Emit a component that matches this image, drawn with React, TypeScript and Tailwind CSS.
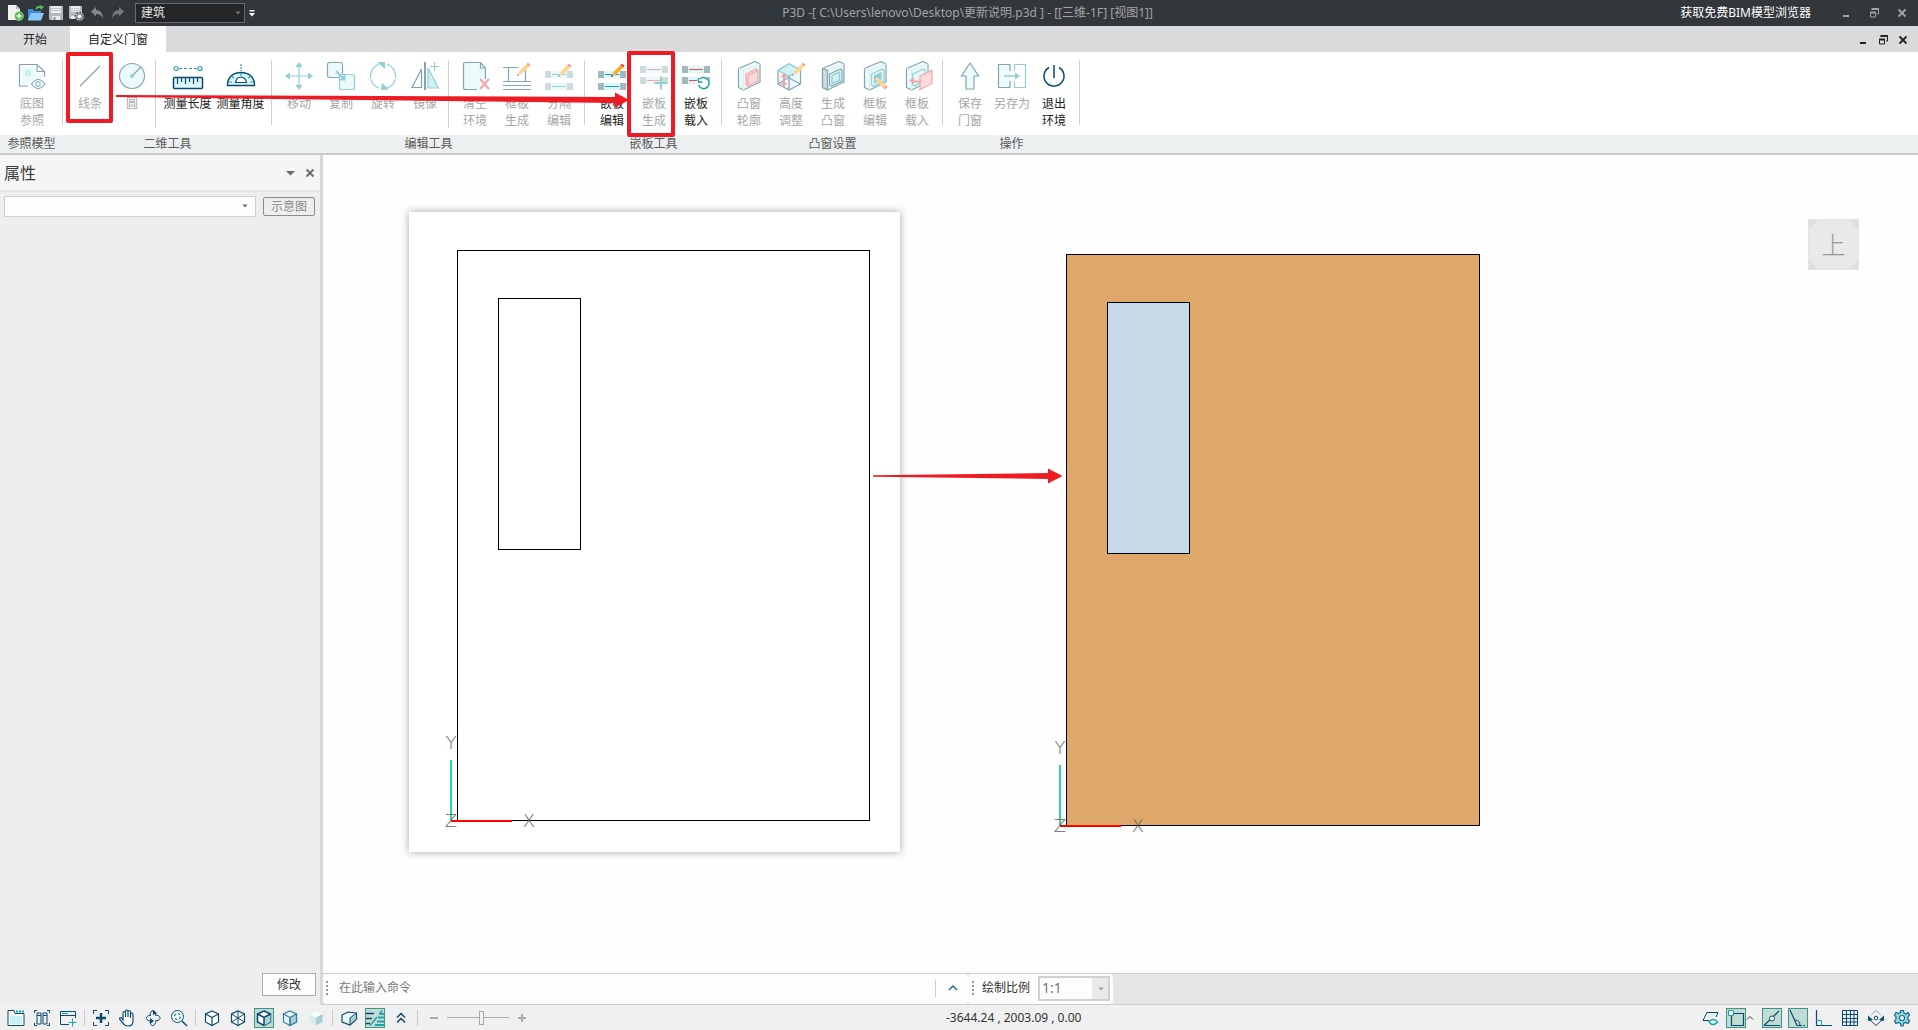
import { useState } from 'react';
import type { ReactNode } from 'react';
import clsx from 'clsx';

const NAVY = '#0b4a6f';
const TEAL = '#1fa3ab';
const PALE = '#dcf7fa';
const RED = '#ee4b50';

interface IconProps {
  children: ReactNode;
  faded?: boolean;
}

function RibbonIcon({ children, faded }: IconProps) {
  return (
    <svg
      width="28"
      height="28"
      viewBox="0 0 28 28"
      fill="none"
      stroke={NAVY}
      strokeWidth="1.2"
      className={clsx('overflow-visible', faded && 'opacity-50')}
      aria-hidden="true"
    >
      {children}
    </svg>
  );
}

/* ---------- shared icon parts ---------- */

function Pencil({ x = 0, y = 0 }: { x?: number; y?: number }) {
  return (
    <g transform={`translate(${x} ${y})`} stroke="none">
      <path d="M2 9.5 9.5 2l2.6 2.6-7.5 7.5z" fill="#ffab1a" />
      <path d="M9.5 2 11 .5l2.6 2.6-1.5 1.5z" fill="#e8413c" />
      <path d="M2 9.5 4.6 12.1 0 14z" fill="#e9c08d" />
      <path d="M.8 11.8 2.3 13 0 14z" fill="#333" />
    </g>
  );
}

function PanelRow({ y, color }: { y: number; color: string }) {
  return (
    <g stroke="none">
      <rect x="0" y={y} width="28" height="7" fill={PALE} />
      <rect x="0" y={y} width="6" height="7" fill="#9fb9bc" />
      <rect x="22" y={y} width="6" height="7" fill="#9fb9bc" />
      <rect x="7" y={y + 3} width="14" height="1" fill={color} />
    </g>
  );
}

function BayBox() {
  return (
    <>
      <path d="M3.5 6.5 20 -.5 25 2v18L8.500 28l-5-2.500z" fill={PALE} strokeLinejoin="round" />
      <path d="M3.500 6.500 8.500 8.500V28M8.500 8.500 25 2" stroke="#bcdfe4" />
    </>
  );
}

/* ---------- ribbon icons ---------- */

const icons: Record<string, ReactNode> = {
  reference: (
    <>
      <path d="M10 24H1.500V2.500H19l7.500 7V15M19 2.500v7h7.500" />
      <path d="M4 5h13v7h7v4l-8 1-5 5H4z" fill={PALE} stroke="none" />
      <rect x="7" y="8" width="6" height="6" fill="#9ce0dc" stroke="none" />
      <path d="M13.500 22q6.500-9 13.500 0-7 9-13.500 0z" fill="#fff" />
      <circle cx="20" cy="22" r="2.200" stroke={TEAL} strokeWidth="1.500" />
    </>
  ),
  line: <path d="M4 24 24 4" />,
  circle: (
    <>
      <circle cx="14" cy="14" r="12.500" fill={PALE} />
      <path d="m14 14 9-9" />
      <circle cx="14" cy="14" r="2" fill={TEAL} stroke="none" />
    </>
  ),
  length: (
    <>
      <circle cx="2" cy="6.500" r="2" stroke={TEAL} />
      <circle cx="26" cy="6.500" r="2" stroke={TEAL} />
      <path d="M5 6.500h18" stroke={TEAL} strokeDasharray="3 2" />
      <rect x="-.5" y="15.500" width="29" height="11" rx="1" fill={PALE} strokeWidth="1.500" />
      <path d="M3.500 16v6M7.500 16v4M11.500 16v6M15.500 16v4M19.500 16v6M23.500 16v4" />
    </>
  ),
  angle: (
    <>
      <path d="M14 2v7" stroke={TEAL} strokeDasharray="2 1" />
      <path d="M.5 23.500C.5 15 6 10.500 14 10.500S27.500 15 27.500 23.500z" fill={PALE} strokeWidth="1.500" />
      <path d="M8.500 20.500c1-7 10-7 11 0z" fill="#fff" />
      <path d="M14 11v3M5 14.500l2 1.500M23 14.500 21 16M2 20h3M23 20h3" stroke={TEAL} />
    </>
  ),
  move: (
    <g stroke={TEAL} fill={TEAL}>
      <path d="M14 3v22M3 14h22" />
      <path d="m14 0 3.500 5h-7zM14 28l3.500-5h-7zM0 14l5-3.500v7zM28 14l-5-3.500v7z" stroke="none" />
    </g>
  ),
  copy: (
    <>
      <rect x=".5" y=".5" width="15" height="15" rx="2" fill={PALE} />
      <rect x="12.500" y="12.500" width="15" height="15" rx="2" fill={PALE} stroke={TEAL} />
      <path d="m9 9 7 7" stroke={TEAL} strokeWidth="2" />
      <path d="M18.500 12v6.500H12z" fill={TEAL} stroke="none" />
    </>
  ),
  rotate: (
    <>
      <path d="M10 2C-2 7-1 22 10 26M18 2c12 5 11 20 0 24" stroke={TEAL} strokeDasharray="18 1" />
      <path d="M8 0h8v7zM12 28l8-.5L13 21z" fill={TEAL} stroke="none" />
    </>
  ),
  mirror: (
    <>
      <path d="M10.500 7v18.500H1z" />
      <path d="M17 6v20h10.500z" fill="#a5e3e0" stroke={TEAL} />
      <path d="M14 0v28" strokeWidth="2" />
      <path d="M23.500 0v9M19 4.500h9" stroke={TEAL} />
    </>
  ),
  clear: (
    <>
      <path d="M24.500 17V6l-5-5.500H4.500q-2 0-2 2v23q0 2 2 2H16M19.500.5V6h5" fill={PALE} />
      <path d="m19 17 9 10M28 17l-9 10" stroke={RED} strokeWidth="2" />
    </>
  ),
  frame: (
    <>
      <path d="M0 5.500h15M5.500 5.500v14M22.500 8v11.500M0 19.500h28M0 23.500h28M0 27.500h28" />
      <Pencil x={14} y={0} />
    </>
  ),
  divide: (
    <>
      <PanelRow y={9} color={TEAL} />
      <PanelRow y={21} color={TEAL} />
      <Pencil x={13} y={1} />
    </>
  ),
  panelAdd: (
    <>
      <PanelRow y={4} color={RED} />
      <PanelRow y={15} color={RED} />
      <path d="M21 14.500v13M14.500 21h13" stroke={TEAL} strokeWidth="2" />
    </>
  ),
  panelLoad: (
    <>
      <PanelRow y={4} color={RED} />
      <PanelRow y={15} color={RED} />
      <circle cx="21.500" cy="21.500" r="7" fill="#fff" stroke="none" />
      <path d="M18 17a5.500 5.500 0 1 1-1.500 6M16.500 16v4h4" stroke={TEAL} strokeWidth="1.500" />
    </>
  ),
  bayOutline: (
    <>
      <BayBox />
      <path d="m11 12 10-5 2 1.500V19l-10 5-2-1z" fill="#f9b3b5" stroke={RED} />
      <path d="m13 13.500 10-5" stroke={RED} />
      <path d="M13 13.500V24" stroke={RED} />
    </>
  ),
  bayHeight: (
    <>
      <path d="M1 8.500 12 2l11.500 6v14L12 28 1 22z" fill={PALE} />
      <path d="M1 8.500 12 2l11.500 6L12 14z" fill="#a5e3e0" stroke={TEAL} />
      <path d="M12 14v14M12 15 1 22M12 16l11.500 6" />
      <path d="M7 13v10" stroke={RED} strokeWidth="2" />
      <path d="m7 11 3.500 4h-7zM7 25l3.500-4h-7z" fill={RED} stroke="none" />
      <Pencil x={15} y={0} />
    </>
  ),
  bayCreate: (
    <>
      <BayBox />
      <path d="m3.500 6.500 5 2V28l-5-2.500z" fill="#9fb9bc" />
      <path d="m10.500 12 11-5 1.500 1v11l-10.500 5-2-1z" fill="#c9eef2" />
      <path d="M13 13.500 20.500 10v8L13 21.500z" fill="#a5e3e0" stroke={TEAL} />
    </>
  ),
  bayEdit: (
    <>
      <BayBox />
      <path d="m10.500 12 11-5 1.500 1v11l-10.500 5-2-1z" fill="#c9eef2" stroke={TEAL} />
      <path d="M13 13.500 20.500 10v8L13 21.500z" fill={TEAL} stroke="none" />
      {/* pencil tip points up and left */}
      <g transform="translate(13 14) matrix(1 0 0 -1 0 14)">
        <Pencil />
      </g>
    </>
  ),
  bayLoad: (
    <>
      <BayBox />
      <path d="m9.500 12 11-5 1.500 1v11l-10.500 5-2-1z" fill="#c9eef2" stroke={TEAL} />
      <path d="m17 14 12-5.500v13L17 27.500z" fill="#f9b9bb" stroke={RED} />
      <path d="m18 20-10-1" stroke={RED} strokeWidth="2" />
      <path d="m6 18.500 5-3v6z" fill={RED} stroke="none" />
    </>
  ),
  save: <path d="m14 1 8.500 13H18v13h-8V14H5.500z" fill={PALE} />,
  saveAs: (
    <>
      <path d="M12 9V2.500H.5v23H12V19" fill={PALE} />
      <path d="M16.500 9V2.500h11v23h-11V19" stroke={TEAL} />
      <path d="M6 14h12" stroke={TEAL} strokeWidth="1.500" />
      <path d="m22 14-5-3.500v7z" fill={TEAL} stroke="none" />
    </>
  ),
  exit: (
    <>
      <path d="M9 5.500a10 10 0 1 0 10 0" strokeWidth="1.500" />
      <path d="M14 3v13" strokeWidth="1.500" />
    </>
  ),
};

type ToolSize = 'normal' | 'medium' | 'wide';

const toolWidths: Record<ToolSize, string> = {
  normal: 'w-[42px]',
  medium: 'w-[52px]',
  wide: 'w-[53px]',
};

interface Tool {
  icon: string;
  lines: string[];
  enabled?: boolean;
  size?: ToolSize;
}

interface ToolGroup {
  title: string;
  sections: Tool[][];
}

const groups: ToolGroup[] = [
  { title: '参照模型', sections: [[{ icon: 'reference', lines: ['底图', '参照'], size: 'medium' }]] },
  {
    title: '二维工具',
    sections: [
      [
        { icon: 'line', lines: ['线条'] },
        { icon: 'circle', lines: ['圆'] },
      ],
      [
        { icon: 'length', lines: ['测量长度'], enabled: true, size: 'wide' },
        { icon: 'angle', lines: ['测量角度'], enabled: true, size: 'wide' },
      ],
    ],
  },
  {
    title: '编辑工具',
    sections: [
      [
        { icon: 'move', lines: ['移动'] },
        { icon: 'copy', lines: ['复制'] },
        { icon: 'rotate', lines: ['旋转'] },
        { icon: 'mirror', lines: ['镜像'] },
      ],
      [
        { icon: 'clear', lines: ['清空', '环境'] },
        { icon: 'frame', lines: ['框板', '生成'] },
        { icon: 'divide', lines: ['分隔', '编辑'] },
      ],
    ],
  },
  {
    title: '嵌板工具',
    sections: [
      [
        { icon: 'divide', lines: ['嵌板', '编辑'], enabled: true },
        { icon: 'panelAdd', lines: ['嵌板', '生成'] },
        { icon: 'panelLoad', lines: ['嵌板', '载入'], enabled: true },
      ],
    ],
  },
  {
    title: '凸窗设置',
    sections: [
      [
        { icon: 'bayOutline', lines: ['凸窗', '轮廓'] },
        { icon: 'bayHeight', lines: ['高度', '调整'] },
        { icon: 'bayCreate', lines: ['生成', '凸窗'] },
        { icon: 'bayEdit', lines: ['框板', '编辑'] },
        { icon: 'bayLoad', lines: ['框板', '载入'] },
      ],
    ],
  },
  {
    title: '操作',
    sections: [
      [
        { icon: 'save', lines: ['保存', '门窗'] },
        { icon: 'saveAs', lines: ['另存为'] },
        { icon: 'exit', lines: ['退出', '环境'], enabled: true },
      ],
    ],
  },
];

function ToolButton({ tool }: { tool: Tool }) {
  return (
    <button
      className={clsx(
        'flex flex-col items-center gap-[5px] pt-2.5 leading-[17px] whitespace-nowrap',
        toolWidths[tool.size ?? 'normal'],
        tool.enabled ? 'text-[#222]' : 'text-[#a6a6a6]',
      )}
    >
      <RibbonIcon faded={!tool.enabled}>{icons[tool.icon]}</RibbonIcon>
      <span>
        {tool.lines.map((line) => (
          <span key={line} className="block">
            {line}
          </span>
        ))}
      </span>
    </button>
  );
}

function Ribbon() {
  return (
    <div className="flex h-[103px] shrink-0 border-b-2 border-[#c8cacc] bg-[linear-gradient(to_bottom,#fff_83px,#ecf0f1_83px)]">
      {groups.map((group) => (
        <section key={group.title} className="flex flex-col">
          <div className="flex h-[83px] shrink-0 items-start pl-1.5">
            {group.sections.map((section, i) => (
              <div key={i} className="flex items-start">
                {i > 0 && <div className="mt-2 mr-[5px] ml-0.5 h-[68px] w-px bg-[#d0d0d0]" />}
                {section.map((tool) => (
                  <ToolButton key={tool.lines.join('')} tool={tool} />
                ))}
              </div>
            ))}
            <div className="mt-2 ml-1 h-[65px] w-px bg-[#d0d0d0]" />
          </div>
          <h2 className="text-center leading-[18px] text-[#5a5a5a]">{group.title}</h2>
        </section>
      ))}
    </div>
  );
}

/* ---------- window chrome ---------- */

function WindowButtons({ className }: { className?: string }) {
  return (
    <div className={clsx('flex items-center', className)}>
      <button aria-label="最小化">
        <svg width="12" height="12" viewBox="0 0 12 12" fill="none" stroke="currentColor">
          <path d="M3 9h6" strokeWidth="2" />
        </svg>
      </button>
      <button aria-label="还原">
        <svg width="12" height="12" viewBox="0 0 12 12" fill="none" stroke="currentColor">
          <path d="M4 3V2h6.500v5H9" />
          <path d="M3.500 2H11" strokeWidth="2" />
          <path d="M2.500 5.500h5v4.500h-5z" />
          <path d="M2 5.500h6" strokeWidth="2" />
        </svg>
      </button>
      <button aria-label="关闭">
        <svg width="12" height="12" viewBox="0 0 12 12" fill="none" stroke="currentColor" strokeWidth="1.800">
          <path d="m2.500 2.500 7 7M9.500 2.500l-7 7" />
        </svg>
      </button>
    </div>
  );
}

function TitleBar() {
  return (
    <header className="flex h-[26px] shrink-0 items-center bg-[#32373b] text-[#a3a3a3]">
      <div className="flex items-center gap-1 pl-[7px]">
        <button aria-label="新建">
          <svg width="17" height="16" viewBox="0 0 17 16">
            <path d="M1 0h8l4 4v11H1z" fill="#f1f1f1" />
            <path d="m9 0 4 4H9z" fill="#bdbdbd" />
            <circle cx="12" cy="11" r="4.500" fill="#4cb84c" stroke="#d9f5d9" strokeWidth=".5" />
            <path d="M12 8.500v5M9.500 11h5" stroke="#fff" strokeWidth="1.500" />
          </svg>
        </button>
        <button aria-label="打开">
          <svg width="16" height="16" viewBox="0 0 16 16">
            <path d="M0 4h5l1 2h7v9H0z" fill="#3c8ed6" />
            <path d="M3 8h13l-3 7.500H0z" fill="#8cc9fa" />
            <path d="M8 4q2-3 5-2" stroke="#58c35a" strokeWidth="1.800" fill="none" />
            <path d="m12 0 4 2-3.500 3z" fill="#58c35a" />
          </svg>
        </button>
        <button aria-label="保存">
          <svg width="16" height="16" viewBox="0 0 16 16">
            <path d="M1 1h14v14H2l-1-1z" fill="#b5babf" />
            <path d="M3 1h10v7H3z" fill="#eceef0" />
            <path d="M3 3.500h10M3 5.500h10" stroke="#c5c9cc" />
            <path d="M4 11h8v4H4z" fill="#e9ebed" />
            <path d="M5.500 12h2v3h-2z" fill="#8a8f94" />
          </svg>
        </button>
        <button aria-label="保存设置">
          <svg width="17" height="17" viewBox="0 0 17 17">
            <path d="M1 1h13v13H2l-1-1z" fill="#b5babf" />
            <path d="M3 1h9v6H3z" fill="#eceef0" />
            <path d="M3 3.500h9M3 5.500h9" stroke="#c5c9cc" />
            <path d="M3 11h6v3H3z" fill="#e9ebed" />
            <circle cx="11.500" cy="11.500" r="4" fill="#e0e3e6" stroke="#5d666f" strokeWidth="2" strokeDasharray="2 1" />
            <circle cx="11.500" cy="11.500" r="2.500" fill="#fff" stroke="#5d666f" />
          </svg>
        </button>
        <button aria-label="撤销" className="ml-0.5">
          <svg width="14" height="14" viewBox="0 0 14 14">
            <path d="M0 5.500 5 1v3q7 0 7 9-1.500-5-7-5v2.500z" fill="#85888b" />
          </svg>
        </button>
        <button aria-label="重做" className="ml-0.5">
          <svg width="14" height="14" viewBox="0 0 14 14">
            <path d="M13 5.500 8 1v3q-7 0-7 9 1.500-5 7-5v2.500z" fill="#75787b" />
          </svg>
        </button>
      </div>
      <div className="relative ml-2.5">
        <select
          aria-label="专业"
          className="block h-5 w-[110px] appearance-none border border-[#666a6d] bg-[#252627] pl-[5px] text-[#e2e2e2]"
        >
          <option>建筑</option>
        </select>
        <svg width="6" height="4" viewBox="0 0 6 4" className="pointer-events-none absolute top-2 right-1">
          <path d="M.5.500h5L3 3.500z" fill="#77797b" />
        </svg>
      </div>
      <button aria-label="自定义快速访问工具栏" className="ml-1">
        <svg width="6" height="8" viewBox="0 0 6 8" fill="#fff">
          <path d="M.5 1h5v1.500h-5zM0 4h6L3 7.500z" />
        </svg>
      </button>
      <h1 className="flex-1 text-center">P3D -[ C:\Users\lenovo\Desktop\更新说明.p3d ] - [[三维-1F] [视图1]]</h1>
      <a href="#" className="text-white">
        获取免费BIM模型浏览器
      </a>
      <WindowButtons className="gap-4 pr-2.5 pl-[29px]" />
    </header>
  );
}

function TabRow() {
  const [active, setActive] = useState('自定义门窗');
  return (
    <nav className="flex h-[26px] shrink-0 items-center bg-[#d9dadc] text-[#222]">
      <button
        onClick={() => setActive('开始')}
        className={clsx('h-full w-[70px] pt-0.5', active === '开始' && 'bg-white')}
      >
        开始
      </button>
      <button
        onClick={() => setActive('自定义门窗')}
        className={clsx('h-full w-24 pt-0.5', active === '自定义门窗' && 'bg-white')}
      >
        自定义门窗
      </button>
      <WindowButtons className="ml-auto gap-2 pt-0.5 pr-[9px]" />
    </nav>
  );
}

/* ---------- left panel ---------- */

function PropertyPanel() {
  return (
    <aside className="flex w-[323px] shrink-0 flex-col border-r-3 border-[#d9d9d9] bg-[#eee]">
      <div className="flex h-[37px] shrink-0 items-center border-b-2 border-[#e4e4e4] bg-[#f5f5f5] px-1 text-[#6a6a6a]">
        <h2 className="flex-1 text-base text-[#3c3c3c]">属性</h2>
        <button aria-label="面板选项" className="mr-2">
          <svg width="12" height="12" viewBox="0 0 12 12">
            <path d="M2 4h9L6.500 8.500z" fill="currentColor" />
          </svg>
        </button>
        <button aria-label="关闭面板">
          <svg width="12" height="12" viewBox="0 0 12 12" fill="none" stroke="currentColor" strokeWidth="1.800">
            <path d="m2.500 2.500 7 7M9.500 2.500l-7 7" />
          </svg>
        </button>
      </div>
      <div className="flex items-center gap-[7px] py-1 pr-[5px] pl-1">
        <div className="relative flex-1">
          <select aria-label="类型" className="block h-[21px] w-full appearance-none border border-[#d0d0d0] bg-[#fdfdfd]">
            <option></option>
          </select>
          <svg width="6" height="4" viewBox="0 0 6 4" className="pointer-events-none absolute top-2 right-2">
            <path d="M.5.500h5L3 3.500z" fill="#666" />
          </svg>
        </div>
        <button className="h-[19px] w-[52px] rounded-xs border border-[#8c8c8c] leading-none text-[#8c8c8c]">示意图</button>
      </div>
      <button className="mt-auto mr-1 mb-[9px] h-[23px] w-[54px] self-end border border-[#adadad] bg-[#fdfdfd] leading-none text-[#333]">
        修改
      </button>
    </aside>
  );
}

/* ---------- canvas ---------- */

interface DoorProps {
  x: number;
  y: number;
  width: number;
  height: number;
  frame: string;
  glass: string;
}

function Door({ x, y, width, height, frame, glass }: DoorProps) {
  return (
    <g transform={`translate(${x} ${y})`}>
      <g stroke="#000" shapeRendering="crispEdges">
        <rect x=".5" y=".5" width={width} height={height} fill={frame} />
        <rect x="41.500" y="48.500" width="82" height="251" fill={glass} />
      </g>
      {/* UCS axes */}
      <g transform={`translate(0 ${height})`}>
        <path d="M-6 0v-60" stroke="#2fd3a6" strokeWidth="2" />
        <path d="M-6 1h61" stroke="#f00" strokeWidth="2" />
        <g fill="#666" fontSize="18" textAnchor="middle" className="font-['DejaVu_Sans',sans-serif] font-extralight">
          <text x="-6" y="-71">Y</text>
          <text x="-6" y="7">Z</text>
          <text x="72" y="7">X</text>
        </g>
      </g>
    </g>
  );
}

function Canvas() {
  return (
    <main className="relative min-h-0 flex-1 overflow-hidden bg-[#fefefe]">
      <div className="absolute top-[57px] left-[86px] h-[640px] w-[491px] bg-white shadow-[0_0_8px_rgba(0,0,0,0.35)]" />
      <svg className="absolute inset-0 h-full w-full" aria-label="门窗图形">
        <Door x={134} y={95} width={412} height={570} frame="#fff" glass="#fff" />
        <Door x={743} y={99} width={413} height={571} frame="#dda869" glass="#c8d9ea" />
        <path d="M550 320.300 725 318v-4.500l14.500 7.500-14.500 7.500V324l-175-2.300z" fill="#ed1c24" />
      </svg>
      <button className="absolute top-16 right-[59px] size-[51px] border border-[#e3e3e3] bg-[#e9e9e9] text-2xl font-light text-[#999]">
        <svg viewBox="0 0 49 49" className="absolute inset-0" fill="#dfdfdf" aria-hidden="true">
          <path d="M0 0h9L0 9zM49 0v9l-9-9zM0 49v-9l9 9zM49 49h-9l9-9z" />
        </svg>
        上
      </button>
    </main>
  );
}

function Grip() {
  return (
    <svg width="2" height="14" viewBox="0 0 2 14" fill="#999">
      <path d="M0 0h2v2H0zM0 4h2v2H0zM0 8h2v2H0zM0 12h2v2H0z" />
    </svg>
  );
}

function CommandBar() {
  return (
    <div className="flex h-8 shrink-0 border-y border-[#cfcfcf] bg-[#e5e5e5]">
      <div className="flex w-[645px] items-center rounded-sm bg-[#fdfdfd] pb-0.5 pl-[3px]">
        <Grip />
        <input
          aria-label="命令"
          placeholder="在此输入命令"
          className="ml-[11px] min-w-0 flex-1 bg-transparent outline-none placeholder:text-[#777]"
        />
        <div className="h-[17px] w-px bg-[#ccc]" />
        <button aria-label="展开" className="mr-2.5 ml-3">
          <svg width="10" height="10" viewBox="0 0 10 10" fill="none" stroke="#2c6b8c" strokeWidth="1.500">
            <path d="m1 7 4-4 4 4" />
          </svg>
        </button>
      </div>
      <div className="flex items-center rounded-sm bg-[#fdfdfd] pr-[3px] pb-0.5 pl-1">
        <Grip />
        <label htmlFor="scale" className="ml-2 text-[#333]">
          绘制比例
        </label>
        <div className="relative ml-2">
          <select
            id="scale"
            className="block h-[25px] w-[72px] appearance-none border-2 border-[#d0d0d0] bg-[linear-gradient(to_right,#fdfdfd_52px,#e9e9e9_52px)] pl-0.5 text-sm leading-5 text-[#777]"
          >
            <option>1:1</option>
          </select>
          <svg width="6" height="4" viewBox="0 0 6 4" className="pointer-events-none absolute top-[11px] right-1.5">
            <path d="M.5.500h5L3 3.500z" fill="#999" />
          </svg>
        </div>
      </div>
    </div>
  );
}

/* ---------- status bar ---------- */

const cube = 'M9 2 15.500 5v8L9 16.500 2.500 13V5z';

const statusIcons: Record<string, ReactNode> = {
  folder: (
    <>
      <path d="M1 16.500V1.500h6l1 3h9v12z" fill="#fff" />
      <path d="M3 7h12v8H3z" fill="#c9f2f5" stroke="none" />
      <path d="M9 2.500h8" stroke={TEAL} strokeWidth="2" strokeDasharray="2 1" />
    </>
  ),
  columns: <path d="M4 1.500H1.500V4M14 1.500h2.500V4M4 16.500H1.500V14M14 16.500h2.500V14M4 4h4v11H4zM10 4h4v11h-4zM4 6.500h4M10 6.500h4" />,
  windowAdd: (
    <>
      <path d="M10 15.500H1.500v-13h15V9M1.500 6.500h15" />
      <path d="M3 4.500h6" stroke={TEAL} />
      <path d="M13.500 9.500v8M9.500 13.500h8" stroke={TEAL} />
    </>
  ),
  focus: (
    <>
      <path d="M5 1.500H1.500V5M13 1.500h3.500V5M5 16.500H1.500V13M13 16.500h3.500V13" />
      <path d="M9 4v10M4 9h10" strokeWidth="2.500" />
    </>
  ),
  pan: (
    <path
      d="M5 11V4q0-1.500 1.200-1.500T7.500 4v4V2.500q0-1.500 1.200-1.500T10 2.500V8 3q0-1.500 1.200-1.500T12.500 3v6-3.500q0-1.500 1.200-1.500T15 5.500V12q0 5-5 5-3.500 0-5-3L1.500 10q0-2 2-1z"
      fill="#fff"
      strokeWidth="1.200"
    />
  ),
  orbit: (
    <>
      <path d="M7 12c-5 0-7-5 0-6M11 6c6 0 7 5 1 6M6 7c0-6 5-8 6-1M12 11c0 6-5 8-6 2" />
      <path d="m6 9 4 3-4 3zM9 1l4 3-4 2z" fill={NAVY} stroke="none" />
    </>
  ),
  zoom: (
    <>
      <circle cx="7.500" cy="7.500" r="6" fill="#fff" />
      <circle cx="7.500" cy="7.500" r="3" stroke={TEAL} strokeWidth="1.500" strokeDasharray="2.700 2" />
      <path d="m12 12 5 5" strokeWidth="1.500" />
    </>
  ),
  cube: (
    <>
      <path d={cube} fill="#fff" strokeWidth="1.200" />
      <path d="M2.500 5 9 8.500 15.500 5M9 8.500v8" strokeWidth="1.200" />
    </>
  ),
  cubeWire: (
    <>
      <path d={cube} fill="#fff" strokeWidth="1.200" />
      <path d="M2.500 5 15.500 13M15.500 5 2.500 13M9 2v14.500" />
    </>
  ),
  cubeEdge: (
    <>
      <path d={cube} fill="#fff" strokeWidth="1.500" />
      <path d="M9 8.500 15.500 5v8L9 16.500z" fill="#a8d0d6" stroke="none" />
      <path d="M2.500 5 9 8.500 15.500 5M9 8.500v8" strokeWidth="1.500" />
    </>
  ),
  cubeShade: (
    <g stroke="#3b7f9f" strokeWidth="1.200">
      <path d={cube} fill="#e4f5f7" />
      <path d="M9 8.500 15.500 5v8L9 16.500z" fill="#a8d0d6" />
      <path d="M2.500 5 9 8.500v8" />
    </g>
  ),
  cubeSoft: (
    <g stroke="none">
      <path d={cube} fill="#d6ecec" />
      <path d="M9 2 15.500 5 9 8.500 2.500 5z" fill="#f7ffff" />
      <path d="M9 8.500 15.500 5v8L9 16.500z" fill="#a9cfd2" />
    </g>
  ),
  section: (
    <>
      <path d="M2 6 8 3l8.500 1v6L10 16l-8-3z" fill="#eaf7f9" strokeWidth="1.200" />
      <path d="m10 9 6.500-5v6L10 16z" fill="#a8d0d6" />
    </>
  ),
  hatch: (
    <>
      <path d="M0 4.500h8M0 9.500h6M0 14.500h4" strokeWidth="1.500" />
      <path d="M16.500 1.500 13 5M11 8 4 16.500" stroke={TEAL} strokeWidth="1.500" />
      <path d="M12 8.500h6M11 12.500h7M9 16h9M14 5h4" stroke={TEAL} strokeWidth="2" />
    </>
  ),
  collapse: <path d="m5 8.500 4-4 4 4M5 13.500l4-4 4 4" strokeWidth="1.500" />,
  visibility: (
    <>
      <path d="M8 11.500H2l4-8h11L15 8" />
      <path d="M8 13q4-5 8.500 0-4.500 5-8.500 0z" fill="#e5fafa" stroke={TEAL} strokeWidth="1.500" />
    </>
  ),
  snapBox: (
    <>
      <path d="M7 4.500h9.500v12h-12V7" strokeWidth="1.200" />
      <path d="M1.500 1.500h5v5h-5z" fill="#fff" stroke={TEAL} />
    </>
  ),
  snapPoint: (
    <>
      <path d="M1 16.500h16M1 16.500 16 2" strokeWidth="1.200" />
      <circle cx="9" cy="9.500" r="2.500" fill="#fff" />
    </>
  ),
  polar: (
    <>
      <path d="m1 1 7 15.500M8 16.500h3" strokeWidth="1.200" />
      <path d="M6 11q5 0 5 5.500" />
      <path d="M11 16.500h6" strokeDasharray="2 1" />
    </>
  ),
  ortho: (
    <>
      <path d="M1.500 1v15.500H17" strokeWidth="1.200" />
      <path d="M1.500 11.500h5v5" stroke={TEAL} />
    </>
  ),
  grid: <path d="M1.500 1.500h15v15h-15zM5.500 1v16M9.500 1v16M13 1v16M1 5.500h16M1 9.500h16M1 13h16" />,
  views: (
    <>
      <path d="m4 6 5-4.500L14 6" stroke="#8db2c2" />
      <path d="m3 11 6 5.500 6-5.500" stroke={NAVY} />
      <path d="M1 12V6.500L6 11zM17 12V6.500L12 11z" fill={NAVY} stroke="none" />
      <circle cx="9" cy="9" r="1.800" fill="#fff" />
    </>
  ),
  settings: (
    <>
      <path
        d="M7.500 1.500h3l.5 2.500 2 1L15 3.500l1.500 2.500L15 8v2l1.500 2-1.500 2.500-2.500-1-2 1L10 17H8l-.5-2.500-2-1-2.500 1L1.500 12 3 10V8L1.500 6 3 3.500l2.500 1 2-1z"
        fill="#8fd6dc"
        stroke="#1d6784"
        strokeWidth="1.200"
      />
      <circle cx="9" cy="9" r="2.500" fill="#fff" stroke="#1d6784" strokeWidth="1.200" />
    </>
  ),
};

interface StatusButtonProps {
  icon: string;
  active?: boolean;
  narrow?: boolean;
}

function StatusButton({ icon, active, narrow }: StatusButtonProps) {
  return (
    <button aria-label={icon} className={clsx('flex h-full items-center justify-center', narrow ? 'w-5' : 'w-[26px]')}>
      <span
        className={clsx(
          'flex size-5 items-center justify-center',
          active && 'border border-[#3f9585] bg-[#c0dcd5]',
        )}
      >
        <svg width="18" height="18" viewBox="0 0 18 18" fill="none" stroke={NAVY} className="shrink-0" aria-hidden="true">
          {statusIcons[icon]}
        </svg>
      </span>
    </button>
  );
}

function StatusSeparator() {
  return <div className="mx-[3px] h-4 w-px bg-[#c9c9c9]" />;
}

function StatusBar() {
  const [zoom, setZoom] = useState(56);
  return (
    <footer className="flex h-[25px] shrink-0 items-center bg-[#f0f0f0] px-[3px] text-[#333]">
      <div className="flex h-full w-[943px] items-center">
        <StatusButton icon="folder" />
        <StatusButton icon="columns" />
        <StatusButton icon="windowAdd" />
        <StatusSeparator />
        <StatusButton icon="focus" />
        <StatusButton icon="pan" />
        <StatusButton icon="orbit" />
        <StatusButton icon="zoom" />
        <StatusSeparator />
        <StatusButton icon="cube" />
        <StatusButton icon="cubeWire" />
        <StatusButton icon="cubeEdge" active />
        <StatusButton icon="cubeShade" />
        <StatusButton icon="cubeSoft" />
        <StatusSeparator />
        <StatusButton icon="section" />
        <StatusButton icon="hatch" active />
        <StatusButton icon="collapse" />
        <StatusSeparator />
        <button aria-label="缩小" className="flex w-[26px] justify-center">
          <svg width="8" height="8" viewBox="0 0 8 8">
            <path d="M0 4h8" stroke="#aaa" strokeWidth="2" />
          </svg>
        </button>
        <input
          type="range"
          aria-label="缩放"
          value={zoom}
          onChange={(e) => setZoom(Number(e.target.value))}
          className="h-4 w-[62px] appearance-none bg-[linear-gradient(#aaa,#aaa)] bg-[length:100%_1px] bg-center bg-no-repeat [&::-webkit-slider-thumb]:h-3.5 [&::-webkit-slider-thumb]:w-[5px] [&::-webkit-slider-thumb]:appearance-none [&::-webkit-slider-thumb]:border [&::-webkit-slider-thumb]:border-[#aaa] [&::-webkit-slider-thumb]:bg-[#f0f0f0]"
        />
        <button aria-label="放大" className="flex w-[26px] justify-center">
          <svg width="8" height="8" viewBox="0 0 8 8">
            <path d="M0 4h8M4 0v8" stroke="#aaa" strokeWidth="2" />
          </svg>
        </button>
      </div>
      <output className="whitespace-pre">-3644.24 , 2003.09 , 0.00</output>
      <div className="ml-auto flex h-full items-center">
        <StatusButton icon="visibility" />
        <div className="ml-[3px] flex h-full items-center">
          <StatusButton icon="snapBox" active narrow />
          <button aria-label="捕捉选项" className="w-[13px]">
            <svg width="8" height="8" viewBox="0 0 8 8" fill="none" stroke="#444">
              <path d="M1 5.500 4 2.500l3 3" />
            </svg>
          </button>
        </div>
        <StatusButton icon="snapPoint" active />
        <StatusButton icon="polar" active />
        <StatusButton icon="ortho" />
        <StatusButton icon="grid" />
        <StatusButton icon="views" />
        <StatusButton icon="settings" />
      </div>
    </footer>
  );
}

/* Red callouts that lead from the line tool to the panel tool */
function Callouts() {
  return (
    <svg className="pointer-events-none absolute inset-0 h-full w-full" aria-hidden="true">
      <g fill="none" stroke="#ed1c24" strokeWidth="4" strokeLinejoin="round">
        <rect x="68" y="54" width="43" height="67" />
        <rect x="629" y="53" width="44" height="82" />
      </g>
      <path d="M116 95 615 97V92.500l14 7.500-14 7.500V103L116 97z" fill="#ed1c24" />
    </svg>
  );
}

export default function App() {
  return (
    <div className="relative flex h-screen flex-col overflow-hidden bg-white font-['Noto_Sans','Noto_Sans_CJK_SC',sans-serif] text-xs">
      <TitleBar />
      <TabRow />
      <Ribbon />
      <div className="flex min-h-0 flex-1">
        <PropertyPanel />
        <div className="flex min-w-0 flex-1 flex-col">
          <Canvas />
          <CommandBar />
        </div>
      </div>
      <StatusBar />
      <Callouts />
    </div>
  );
}
